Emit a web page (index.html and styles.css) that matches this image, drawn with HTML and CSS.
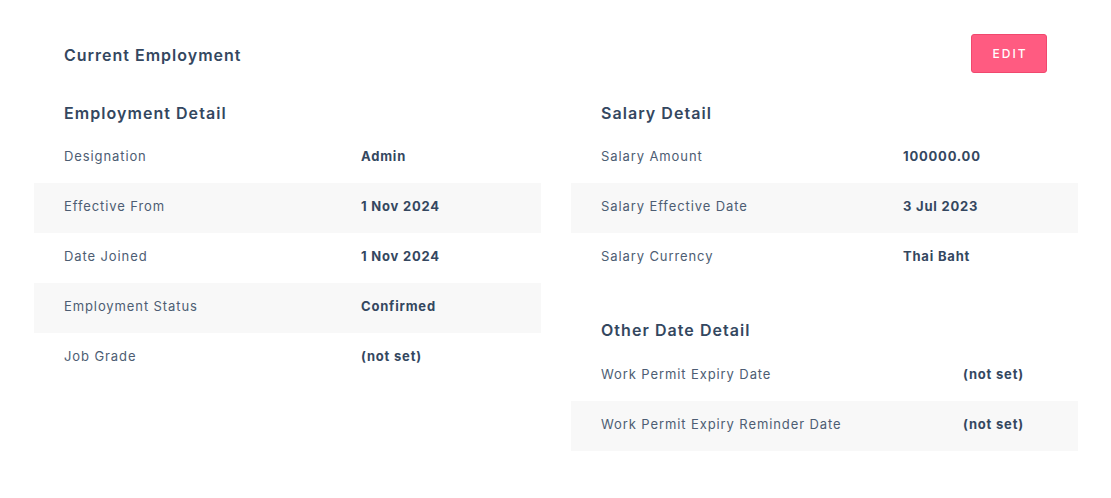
FILE: index.html
```html
<!DOCTYPE html>
<html>
<head>
<meta charset="utf-8">
<link rel="stylesheet" href="styles.css">
</head>
<body>
<div class="page">
  <div class="cols">
    <div class="col">
      <div class="top">
        <div class="title">Current Employment</div>
      </div>
      <div class="section">
        <div class="heading">Employment Detail</div>
        <div class="table t-emp">
          <div class="row"><span class="label">Designation</span><span class="value">Admin</span></div>
          <div class="row alt"><span class="label">Effective From</span><span class="value">1 Nov 2024</span></div>
          <div class="row"><span class="label">Date Joined</span><span class="value">1 Nov 2024</span></div>
          <div class="row alt"><span class="label">Employment Status</span><span class="value">Confirmed</span></div>
          <div class="row"><span class="label">Job Grade</span><span class="value">(not set)</span></div>
        </div>
      </div>
    </div>
    <div class="col">
      <div class="top right">
        <button class="edit">EDIT</button>
      </div>
      <div class="section">
        <div class="heading">Salary Detail</div>
        <div class="table t-sal">
          <div class="row"><span class="label">Salary Amount</span><span class="value">100000.00</span></div>
          <div class="row alt"><span class="label">Salary Effective Date</span><span class="value">3 Jul 2023</span></div>
          <div class="row"><span class="label">Salary Currency</span><span class="value">Thai Baht</span></div>
        </div>
      </div>
      <div class="section other">
        <div class="heading">Other Date Detail</div>
        <div class="table t-oth">
          <div class="row"><span class="label">Work Permit Expiry Date</span><span class="value">(not set)</span></div>
          <div class="row alt"><span class="label">Work Permit Expiry Reminder Date</span><span class="value">(not set)</span></div>
        </div>
      </div>
    </div>
  </div>
</div>
</body>
</html>
```
FILE: styles.css
```css
* { box-sizing: border-box; }
body {
  margin: 0;
  background: #fff;
  font-family: Inter, "Noto Sans", sans-serif;
  color: #3a4a61;
}
.page {
  padding: 34px 33px 0 34px;
}
.cols {
  display: grid;
  grid-template-columns: 507px 507px;
  column-gap: 30px;
}
.top {
  height: 39px;
  display: flex;
  align-items: center;
  padding: 0 30px;
}
.top.right { justify-content: flex-end; padding-right: 31px; }
.title {
  font-size: 16px;
  font-weight: 600;
  letter-spacing: 1px;
  color: #34475f;
  padding-top: 2px;
}
.edit {
  width: 76px;
  height: 39px;
  background: #ff5b81;
  border: 1px solid #f0486e;
  border-radius: 3px;
  color: #fff;
  font-family: inherit;
  font-size: 12px;
  letter-spacing: 2px;
  font-weight: 500;
  padding: 0 0 0 2px;
}
.section { margin-top: 20px; }
.section.other { margin-top: 27px; }
.other .heading { height: 41px; padding-bottom: 2px; }
.heading {
  height: 40px;
  display: flex;
  align-items: center;
  padding: 0 30px;
  font-size: 16px;
  font-weight: 600;
  letter-spacing: 1.05px;
  color: #34475f;
}
.row {
  height: 50px;
  display: grid;
  align-items: center;
  padding-left: 30px;
  padding-bottom: 4px;
}
.t-emp .row { grid-template-columns: 297px 1fr; }
.t-sal .row { grid-template-columns: 302px 1fr; }
.t-oth .row { grid-template-columns: 362px 1fr; }
.row.alt { background: #f8f8f8; }
.label {
  font-size: 13px;
  letter-spacing: 0.9px;
  color: #4d5d73;
}
.value {
  font-size: 13px;
  font-weight: 700;
  letter-spacing: 0.8px;
  color: #34475f;
}
```
